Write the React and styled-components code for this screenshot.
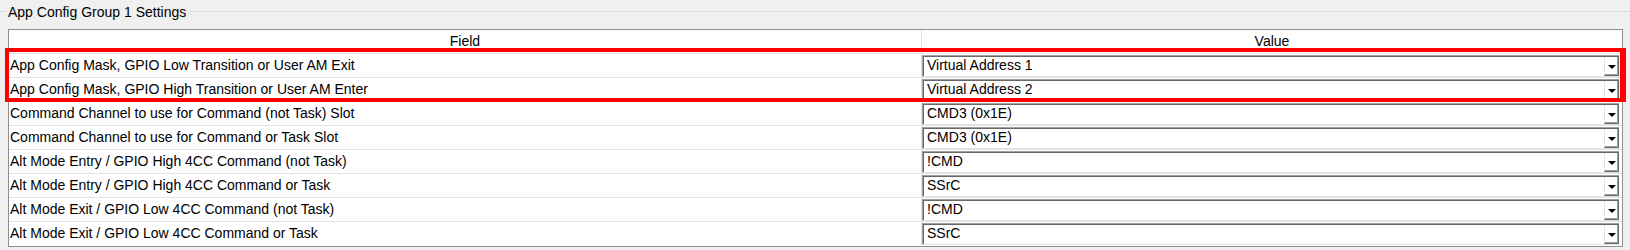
import styled, { createGlobalStyle } from "styled-components"

const GlobalStyle = createGlobalStyle`
    html, body {
        margin: 0;
        background: #f0f0f0;
    }
    body {
        font-family: "Liberation Sans", Arial, sans-serif;
        font-size: 14px;
        color: #000;
    }
`

const rows = [
    { field: "App Config Mask, GPIO Low Transition or User AM Exit", value: "Virtual Address 1" },
    { field: "App Config Mask, GPIO High Transition or User AM Enter", value: "Virtual Address 2" },
    { field: "Command Channel to use for Command (not Task) Slot", value: "CMD3 (0x1E)" },
    { field: "Command Channel to use for Command or Task Slot", value: "CMD3 (0x1E)" },
    { field: "Alt Mode Entry / GPIO High 4CC Command (not Task)", value: "!CMD" },
    { field: "Alt Mode Entry / GPIO High 4CC Command or Task", value: "SSrC" },
    { field: "Alt Mode Exit / GPIO Low 4CC Command (not Task)", value: "!CMD" },
    { field: "Alt Mode Exit / GPIO Low 4CC Command or Task", value: "SSrC" },
]

export default function App() {
    return (
        <>
            <GlobalStyle />
            <Page>
                <GroupTitle>
                    <TitleText>App Config Group 1 Settings</TitleText>
                </GroupTitle>
                <Grid>
                    <HeadCell>Field</HeadCell>
                    <HeadCell $last>Value</HeadCell>
                    {rows.map((row, i) => (
                        <Row key={i} $last={i === rows.length - 1}>
                            <FieldCell>{row.field}</FieldCell>
                            <ValueCell>
                                <Combo>
                                    <ComboText>{row.value}</ComboText>
                                    <DropButton>
                                        <Arrow />
                                    </DropButton>
                                </Combo>
                            </ValueCell>
                        </Row>
                    ))}
                </Grid>
                <Highlight />
            </Page>
        </>
    )
}

const Page = styled.div`
    position: relative;
    width: 1630px;
    height: 250px;
    overflow: hidden;
`
const GroupTitle = styled.div`
    display: flex;
    align-items: center;
    height: 23px;
    &::before {
        content: "";
        width: 6px;
        height: 1px;
        background: #dcdcdc;
    }
    &::after {
        content: "";
        flex: 1;
        height: 1px;
        background: #dcdcdc;
    }
`
const TitleText = styled.span`
    padding: 0 4px 0 2px;
    line-height: 16px;
`
const Grid = styled.div`
    display: grid;
    grid-template-columns: 913px 1fr;
    width: 1615px;
    box-sizing: border-box;
    margin: 6px 0 0 8px;
    background: #fff;
    border: 1px solid #8e8f8f;
`
const HeadCell = styled.div`
    height: 23px;
    line-height: 23px;
    text-align: center;
    border-bottom: 1px solid #e3e3e3;
    border-right: ${(p) => (p.$last ? "none" : "1px solid #e3e3e3")};
`
const Row = styled.div`
    display: contents;
    & > div {
        border-bottom: ${(p) => (p.$last ? "none" : "1px solid #e3e3e3")};
    }
`
const FieldCell = styled.div`
    height: 23px;
    line-height: 23px;
    padding-left: 1px;
    border-right: 1px solid #e3e3e3;
    white-space: nowrap;
`
const ValueCell = styled.div`
    height: 24px;
    padding: 1px 3px 0 0;
    box-sizing: border-box;
`
const Combo = styled.div`
    display: flex;
    height: 22px;
    box-sizing: border-box;
    border-style: solid;
    border-width: 1px 0 1px 1px;
    border-color: #a0a0a0 transparent #e3e3e3 #a0a0a0;
    box-shadow: inset 1px 1px 0 #696969;
    background: #fff;
`
const ComboText = styled.span`
    flex: 1;
    padding-left: 4px;
    line-height: 19px;
`
const DropButton = styled.span`
    display: flex;
    align-items: center;
    justify-content: center;
    width: 15px;
    margin-top: 1px;
    box-sizing: border-box;
    border-left: 1px solid #e3e3e3;
    border-right: 1px solid #696969;
    border-bottom: 1px solid #696969;
    box-shadow: inset -1px -1px 0 #a0a0a0;
    background: #fff;
`
const Arrow = styled.span`
    width: 0;
    height: 0;
    margin-top: 2px;
    border-left: 4px solid transparent;
    border-right: 4px solid transparent;
    border-top: 4px solid #000;
`
const Highlight = styled.div`
    position: absolute;
    left: 5px;
    top: 48px;
    width: 1621px;
    height: 54px;
    box-sizing: border-box;
    border: 4px solid #ff0000;
    border-right-width: 6px;
    pointer-events: none;
`
